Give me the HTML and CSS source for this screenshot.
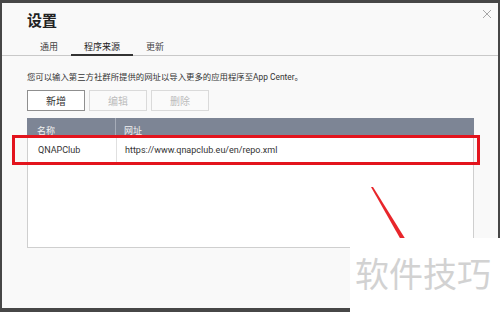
FILE: index.html
```html
<!DOCTYPE html>
<html lang="zh-CN">
<head>
<meta charset="utf-8">
<title>设置</title>
<link rel="stylesheet" href="styles.css">
</head>
<body>
<div class="dialog">
  <div class="title-row">
    <div class="title">设置</div>
    <svg class="close" width="10" height="10" viewBox="0 0 10 10"><path d="M1 1L9 9M9 1L1 9" stroke="#a8a8a8" stroke-width="1" fill="none"/></svg>
  </div>
  <div class="tabs">
    <div class="tab">通用</div>
    <div class="tab active">程序来源</div>
    <div class="tab">更新</div>
  </div>
  <div class="content">
    <p class="desc">您可以输入第三方社群所提供的网址以导入更多的应用程序至App Center。</p>
    <div class="buttons">
      <button class="btn">新增</button>
      <button class="btn disabled">编辑</button>
      <button class="btn disabled">删除</button>
    </div>
    <div class="table">
      <div class="thead">
        <div class="cell c1">名称</div>
        <div class="cell c2">网址</div>
      </div>
      <div class="row">
        <div class="cell c1">QNAPClub</div>
        <div class="cell c2">https://www.qnapclub.eu/en/repo.xml</div>
      </div>
    </div>
  </div>
</div>
<div class="highlight"></div>
<svg class="arrow" width="500" height="312" viewBox="0 0 500 312"><polygon points="371,187 373,187 406,240 401,240" fill="#e8262b"/></svg>
<div class="watermark">软件技巧</div>
</body>
</html>
```
FILE: styles.css
```css
html, body {
  margin: 0;
  padding: 0;
}
body {
  width: 500px;
  height: 312px;
  background: #474747;
  position: relative;
  overflow: hidden;
  font-family: Roboto, "Noto Sans CJK SC", sans-serif;
  color: #333;
}
.dialog {
  margin: 3px 2px 0 2px;
  height: 305px;
  background: #f9f9f9;
  display: flex;
  flex-direction: column;
}
.title-row {
  display: flex;
  justify-content: space-between;
  align-items: flex-start;
  padding: 8px 6px 0 25px;
}
.title {
  font-size: 15px;
  font-weight: bold;
  line-height: 20px;
  color: #222;
}
.close {
  margin-top: -2px;
}
.tabs {
  display: flex;
  margin-top: 9px;
  padding-left: 25px;
  border-bottom: 1px solid #c9c9c9;
}
.tab {
  font-size: 9px;
  line-height: 14px;
  padding: 0 13px;
  color: #444;
  border-bottom: 2px solid transparent;
  margin-bottom: -1px;
}
.tab.active {
  border-bottom-color: #333;
  color: #222;
}
.content {
  padding: 0 25px;
}
.desc {
  margin: 14px 0 0 0;
  font-size: 8.4px;
  line-height: 14px;
  color: #333;
}
.buttons {
  display: flex;
  gap: 4px;
  margin-top: 6px;
}
.btn {
  width: 58px;
  height: 21px;
  padding: 0;
  margin: 0;
  font-family: Roboto, "Noto Sans CJK SC", sans-serif;
  font-size: 10px;
  color: #333;
  background: #fff;
  border: 1px solid #8f8f8f;
}
.btn.disabled {
  color: #bcbcbc;
  background: #fafafa;
  border-color: #dadada;
}
.table {
  margin-top: 7px;
  width: 447px;
  height: 130px;
  box-sizing: border-box;
  background: #fff;
  border: 1px solid #cfcfcf;
  border-top: none;
}
.thead {
  display: flex;
  height: 19px;
  margin: 0 -1px;
  background: #7d8595;
  color: #f2f2f2;
}
.thead .cell {
  font-size: 9px;
  line-height: 12px;
  padding-top: 7px;
}
.cell.c1 {
  width: 89px;
  padding-left: 10px;
  box-sizing: border-box;
  border-right: 1px solid #a6acb8;
}
.cell.c2 {
  padding-left: 8px;
}
.row {
  display: flex;
  height: 27px;
  align-items: stretch;
  border-bottom: 1px solid #e4e4e4;
}
.row .cell {
  font-size: 9px;
  line-height: 27px;
  color: #333;
}
.row .cell.c1 {
  width: 89px;
  border-right: 1px solid #e0e0e0;
}
.highlight {
  position: absolute;
  left: 12px;
  top: 135px;
  width: 462px;
  height: 24px;
  border: 3px solid #e3141d;
}
.arrow {
  position: absolute;
  left: 0;
  top: 0;
}
.watermark {
  position: absolute;
  left: 350px;
  top: 238px;
  width: 150px;
  height: 74px;
  background: #fff;
  font-family: "Noto Sans CJK SC", sans-serif;
  font-size: 34px;
  line-height: 70px;
  color: #d2d2d2;
  padding-left: 5px;
  box-sizing: border-box;
  white-space: nowrap;
}
```
